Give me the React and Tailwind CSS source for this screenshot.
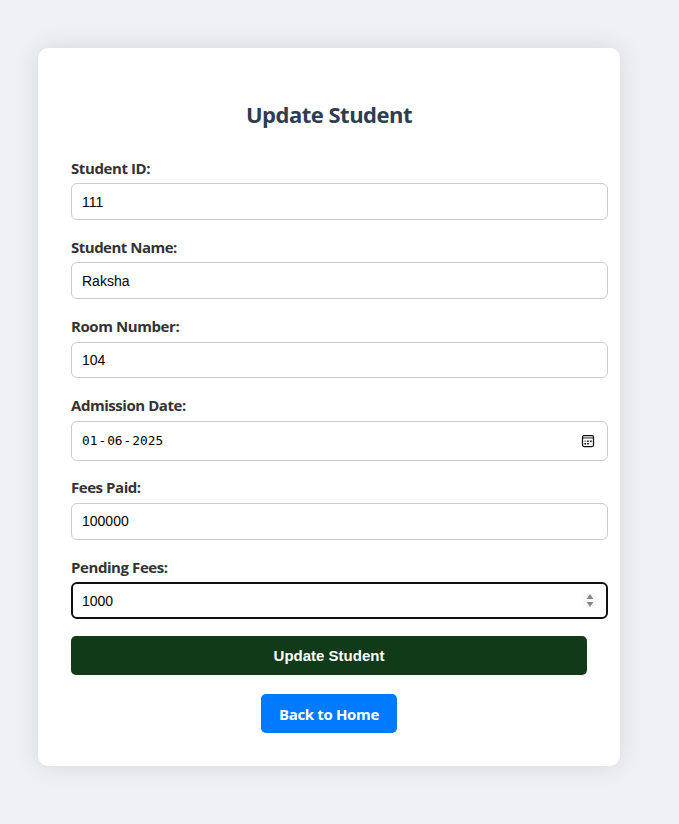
const box = "box-border flex w-[537px] items-center rounded-[6px] bg-white pl-[10px] font-['Liberation_Sans',Arial,sans-serif] text-[14px] leading-[16px] text-black";
const plain = "border border-[#cccccc]";

function Field({ label, labelClass, className, children }) {
  return (
    <div className={"flex flex-col justify-end " + className}>
      <label className={"block h-[20px] text-[15px] leading-[20px] font-bold whitespace-nowrap text-[#333333] " + labelClass}>
        {label}
      </label>
      {children}
    </div>
  );
}

function CalendarIcon() {
  return (
    <svg width="14" height="14" viewBox="0 0 14 14" fill="none">
      <path d="M1.5 3h11v1.8h-11z" fill="#888" />
      <rect x="1.5" y="1.5" width="11" height="11" rx="1.8" stroke="#111" strokeWidth="1.25" />
      <path d="M6.1 7.2h1.7M9 7.2h1.7M3.4 9.8h1.7M6.1 9.8h1.7" stroke="#111" strokeWidth="1.6" />
      <path d="M3.4 7.2h1.7" stroke="#111" strokeOpacity=".5" strokeWidth="1.6" />
    </svg>
  );
}

export default function App() {
  return (
    <main className="h-[824px] w-[679px] overflow-hidden bg-[#edf1f6] pt-[48px] pl-[38px] font-['Open_Sans','Noto_Sans',sans-serif]">
      <section className="h-[718px] w-[582px] rounded-[10px] bg-white pt-[50px] pl-[33px] shadow-[0_0_25px_rgba(0,0,0,0.1)]">
        <h2 className="mb-px h-[32px] w-[516px] text-center text-[22px] leading-[32px] font-bold tracking-[-0.5px] text-[#2c3e50]">Update Student</h2>
        <Field label="Student ID:" labelClass="mb-[5px] tracking-[-0.4px]" className="h-[89px]">
          <div className={box + " h-[37px] " + plain}>111</div>
        </Field>
        <Field label="Student Name:" labelClass="mb-[5px] tracking-[-0.5px]" className="h-[79px]">
          <div className={box + " h-[37px] " + plain}>Raksha</div>
        </Field>
        <Field label="Room Number:" labelClass="mb-[6px] tracking-[-0.42px]" className="h-[79px]">
          <div className={box + " h-[36px] " + plain}>104</div>
        </Field>
        <Field label="Admission Date:" labelClass="mb-[6px] tracking-[-0.45px]" className="h-[83px]">
          <div className={box + " h-[40px] justify-between pr-[12px] " + plain}>
            <span className="flex font-['DejaVu_Sans_Mono',monospace] text-[12.8px]">
              <span>01</span><span className="px-[1px]">-</span><span>06</span><span className="px-[1px]">-</span><span>2025</span>
            </span>
            <CalendarIcon />
          </div>
        </Field>
        <Field label="Fees Paid:" labelClass="mb-[6px] tracking-[-0.45px]" className="h-[79px]">
          <div className={box + " h-[37px] pb-px " + plain}>100000</div>
        </Field>
        <Field label="Pending Fees:" labelClass="mb-[5px] tracking-[-0.42px]" className="h-[79px]">
          <div className={box + " h-[37px] justify-between border-2 border-[#101010] !pl-[9px] pr-[10px]"}>
            <span>1000</span>
            <span className="flex h-[15px] w-[13px] items-center justify-center bg-[#fafafa]">
              <svg width="8" height="13" viewBox="0 0 8 13" fill="#858585">
                <path d="M4 0L7.4 5H.6zM.6 8h6.8L4 13z" />
              </svg>
            </span>
          </div>
        </Field>
        <button className="mt-[17px] block h-[39px] w-[516px] rounded-[5px] bg-[#103a18] font-['Liberation_Sans',Arial,sans-serif] text-[15px] leading-[39px] font-bold text-white">Update Student</button>
        <div className="mt-[19px] flex w-[516px] justify-center">
          <a className="h-[39px] w-[136px] rounded-[5px] bg-[#007bff] text-center text-[15px] leading-[40px] font-bold tracking-[-0.35px] text-white">Back to Home</a>
        </div>
      </section>
    </main>
  );
}
